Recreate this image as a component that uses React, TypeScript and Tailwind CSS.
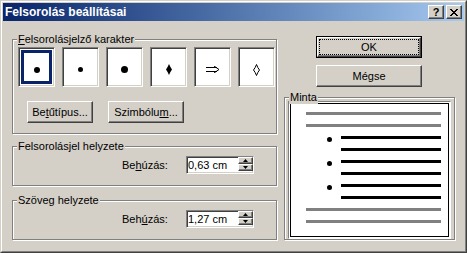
const raised =
  "border border-t-white border-l-white border-r-[#404040] border-b-[#404040] shadow-[inset_-1px_-1px_0_#808080] bg-[#d4d0c8]";
const sunken =
  "border border-t-[#808080] border-l-[#808080] border-r-white border-b-white shadow-[inset_1px_1px_0_#404040,inset_-1px_-1px_0_#d4d0c8]";
const etched = "border border-[#808080] shadow-[1px_1px_0_#fff,inset_1px_1px_0_#fff]";

const Group = ({ label, className, children }: { label: React.ReactNode; className: string; children?: React.ReactNode }) => (
  <div className={`relative ${etched} ${className}`}>
    <span className="absolute left-[4px] top-[-7px] bg-[#d4d0c8] px-[1px] leading-[13px] whitespace-nowrap">{label}</span>
    {children}
  </div>
);

const CharBox = ({ selected, children }: { selected?: boolean; children: React.ReactNode }) => (
  <div className={`relative w-[37px] h-[40px] bg-white ${sunken} flex items-center justify-center pt-[5px]`}>
    {selected && <div className="absolute inset-[2px] border-[3px] border-[#0a246a]" />}
    {children}
  </div>
);

const Dot = ({ size }: { size: number }) => (
  <svg width={size} height={size} viewBox="0 0 10 10">
    <circle cx="5" cy="5" r="5" fill="#000" />
  </svg>
);

const Spin = ({ value }: { value: string }) => (
  <div className={`w-[68px] h-[18px] bg-white ${sunken} flex items-stretch`}>
    <span className="flex-1 flex items-center pl-[1px]">{value}</span>
    <div className="flex flex-col w-[15px]">
      <div className={`h-[7px] ${raised} flex items-center justify-center`}>
        <svg width="5" height="3" viewBox="0 0 5 3">
          <path d="M2.5 0 L5 3 L0 3 Z" fill="#000" />
        </svg>
      </div>
      <div className={`h-[7px] ${raised} flex items-center justify-center`}>
        <svg width="5" height="3" viewBox="0 0 5 3">
          <path d="M0 0 L5 0 L2.5 3 Z" fill="#000" />
        </svg>
      </div>
    </div>
  </div>
);

const Btn = ({ className, children }: { className: string; children: React.ReactNode }) => (
  <div className={`h-[22px] ${raised} flex items-center justify-center ${className}`}>{children}</div>
);

export default function App() {
  return (
    <div className="w-[467px] h-[253px] bg-[#d4d0c8] border border-t-[#d4d0c8] border-l-[#d4d0c8] border-r-[#404040] border-b-[#404040] font-['Liberation_Sans',Arial,sans-serif] text-[11px] leading-[13px] text-black">
      <div className="h-full border border-t-white border-l-white border-r-[#808080] border-b-[#808080] p-[1px]">
        {/* title bar */}
        <div className="h-[18px] flex items-center bg-linear-to-r from-[#0a246a] to-[#a6caf0] pl-[2px] pr-[2px]">
          <span className="flex-1 text-white font-bold text-[12px]">Felsorolás beállításai</span>
          <div className={`w-[16px] h-[14px] ${raised} flex items-center justify-center font-bold text-[11px] leading-none`}>?</div>
          <div className={`ml-[2px] w-[16px] h-[14px] ${raised} flex items-center justify-center`}>
            <svg width="8" height="7" viewBox="0 0 8 7" shapeRendering="crispEdges">
              <path
                d="M0 0h2v1H0zM6 0h2v1H6zM1 1h2v1H1zM5 1h2v1H5zM2 2h4v1H2zM3 3h2v1H3zM2 4h4v1H2zM1 5h2v1H1zM5 5h2v1H5zM0 6h2v1H0zM6 6h2v1H6z"
                fill="#000"
              />
            </svg>
          </div>
        </div>

        <div className="flex pl-[9px]">
          {/* left column */}
          <div className="w-[265px] flex flex-col">
            <Group
              className="mt-[18px] h-[95px]"
              label={
                <>
                  <u>F</u>elsorolásjelző karakter
                </>
              }
            >
              <div className="flex gap-[7px] pl-[5px] pt-[7px]">
                <CharBox selected>
                  <Dot size={6} />
                </CharBox>
                <CharBox>
                  <Dot size={5} />
                </CharBox>
                <CharBox>
                  <Dot size={7} />
                </CharBox>
                <CharBox>
                  <svg width="6" height="11" viewBox="0 0 6 11">
                    <path d="M3 0 Q4.5 3.5 6 5.5 Q4.5 7.5 3 11 Q1.5 7.5 0 5.5 Q1.5 3.5 3 0Z" fill="#000" />
                  </svg>
                </CharBox>
                <CharBox>
                  <svg width="14" height="7" viewBox="0 0 14 7">
                    <path d="M0 1.5H11M0 5.5H11M8 0L13 3.5L8 7" stroke="#000" strokeWidth="1" fill="none" />
                  </svg>
                </CharBox>
                <CharBox>
                  <svg width="7" height="12" viewBox="0 0 7 12">
                    <path d="M3.5 0.5 Q4.8 4 6.5 6 Q4.8 8 3.5 11.5 Q2.2 8 0.5 6 Q2.2 4 3.5 0.5Z" stroke="#000" strokeWidth="1" fill="none" />
                  </svg>
                </CharBox>
              </div>
              <div className="flex gap-[15px] pl-[14px] mt-[14px]">
                <Btn className="w-[66px]">
                  Be<u>t</u>űtípus...
                </Btn>
                <Btn className="w-[76px]">
                  Szimbólu<u>m</u>...
                </Btn>
              </div>
            </Group>

            <Group className="mt-[12px] h-[40px]" label="Felsorolásjel helyzete">
              <div className="flex items-center pt-[9px] pl-[109px]">
                <span className="w-[64px]">
                  Be<u>h</u>úzás:
                </span>
                <Spin value="0,63 cm" />
              </div>
            </Group>

            <Group className="mt-[14px] h-[40px]" label="Szöveg helyzete">
              <div className="flex items-center pt-[9px] pl-[109px]">
                <span className="w-[64px]">
                  Beh<u>ú</u>zás:
                </span>
                <Spin value="1,27 cm" />
              </div>
            </Group>
          </div>

          {/* right column */}
          <div className="ml-[7px] w-[171px] flex flex-col">
            <div className="mt-[15px] ml-[32px] w-[106px] h-[22px] border border-black">
              <div className="h-full border border-t-white border-l-white border-r-[#404040] border-b-[#404040] shadow-[inset_-1px_-1px_0_#808080] bg-[#d4d0c8] p-[1px]">
                <div className="h-full border border-dotted border-black flex items-center justify-center">OK</div>
              </div>
            </div>
            <Btn className="mt-[7px] ml-[32px] w-[106px]">Mégse</Btn>

            <Group className="mt-[10px] h-[143px]" label="Minta">
              <div className="mt-[3px] ml-[3px] w-[163px] h-[138px] border border-t-[#808080] border-l-[#808080] border-r-white border-b-white bg-white p-[1px]">
                <div className="h-full border border-black flex flex-col gap-[9px] pt-[8px]">
                  <div className="ml-[15px] w-[135px] h-[3px] bg-[#808080]" />
                  <div className="ml-[15px] w-[135px] h-[3px] bg-[#808080]" />
                  {[0, 1, 2].map((i) => (
                    <div key={i} className="contents">
                      <div className="flex items-start h-[3px]">
                        <div className="ml-[36px] mt-[1px] w-[5px] h-[5px] shrink-0 rounded-full bg-black" />
                        <div className="ml-[9px] w-[100px] h-[3px] bg-black" />
                      </div>
                      <div className="ml-[50px] w-[100px] h-[3px] bg-black" />
                    </div>
                  ))}
                  <div className="ml-[15px] w-[135px] h-[3px] bg-[#808080]" />
                  <div className="ml-[15px] w-[135px] h-[3px] bg-[#808080]" />
                </div>
              </div>
            </Group>
          </div>
        </div>
      </div>
    </div>
  );
}
